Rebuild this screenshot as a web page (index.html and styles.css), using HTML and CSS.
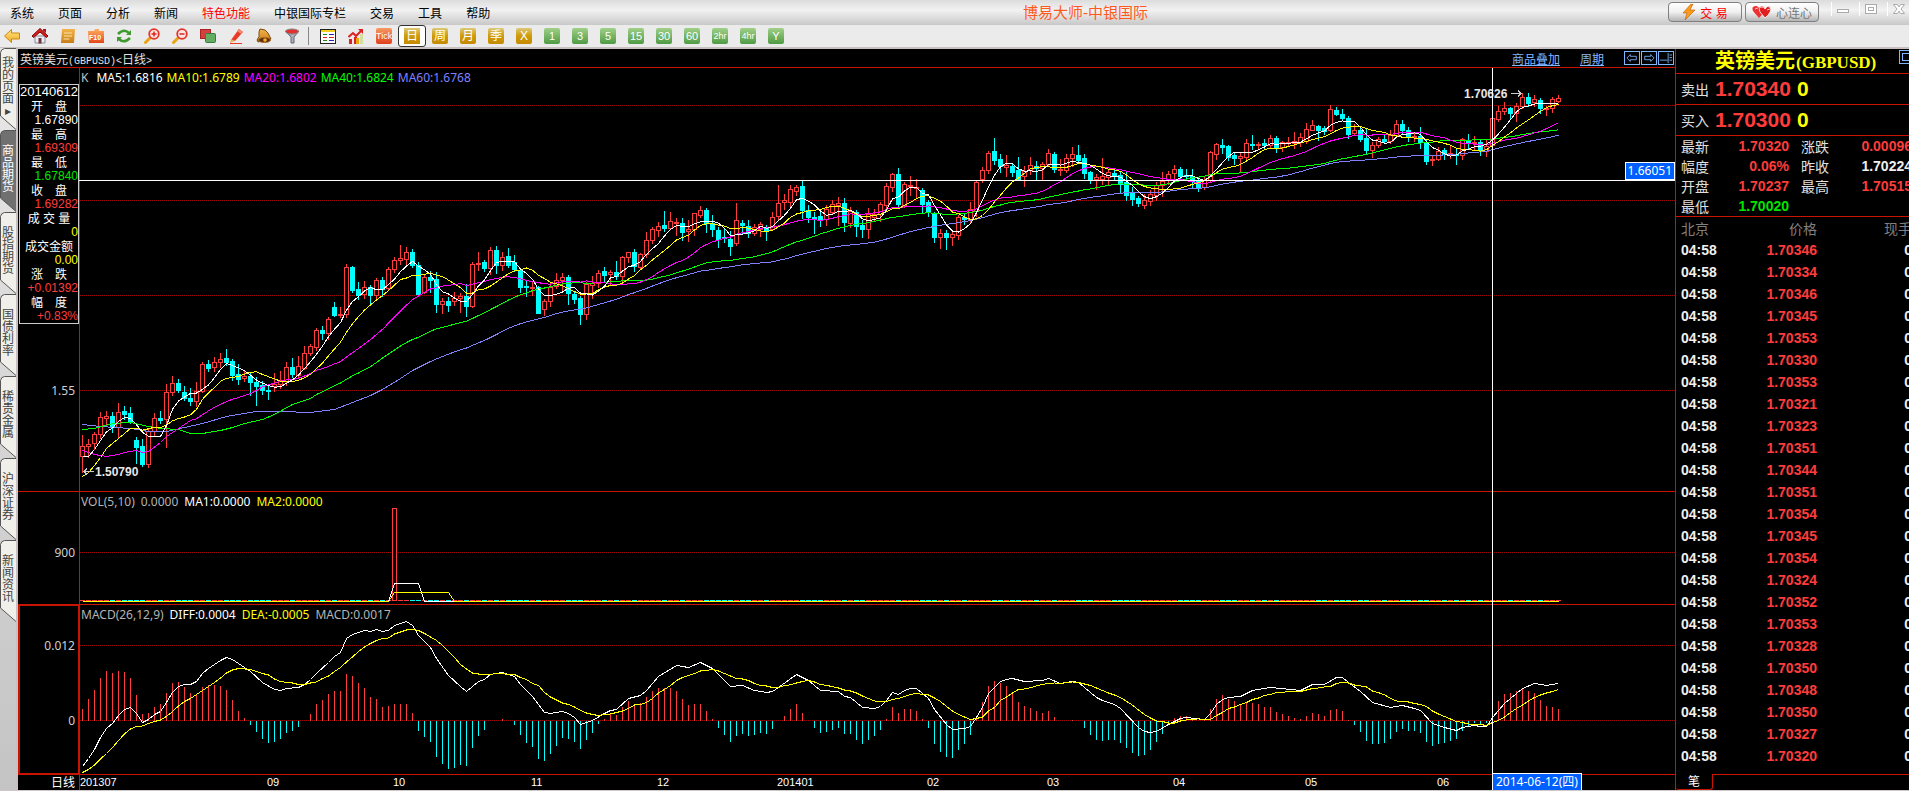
FILE: index.html
```html
<!DOCTYPE html>
<html lang="zh-CN">
<head>
    <meta charset="UTF-8">
    <meta name="viewport" content="width=device-width, initial-scale=1.0">
    <title>博易大师-中银国际</title>
    <link rel="stylesheet" href="styles.css">
</head>
<body>
    <svg class="defs" aria-hidden="true">
        <defs>
            <linearGradient id="gold" x1="0" y1="0" x2="0" y2="1"><stop offset="0" stop-color="#ffe88a"/><stop offset="1" stop-color="#f2a81c"/></linearGradient>
            <linearGradient id="orange" x1="0" y1="0" x2="0" y2="1"><stop offset="0" stop-color="#ffb060"/><stop offset="1" stop-color="#e2461a"/></linearGradient>
            <linearGradient id="bronze" x1="0" y1="0" x2="0" y2="1"><stop offset="0" stop-color="#f3b44a"/><stop offset="1" stop-color="#c87d18"/></linearGradient>
            <symbol id="tab" viewBox="0 0 16 82"><path d="M16 .5H4.500Q1 1 .5 4.500V68L16 81.500" fill="currentColor" stroke="#555"/></symbol>
        </defs>
    </svg>

    <header class="menubar">
        <nav class="menu">
            <a href="#">系统</a>
            <a href="#">页面</a>
            <a href="#">分析</a>
            <a href="#">新闻</a>
            <a href="#" class="hot">特色功能</a>
            <a href="#">中银国际专栏</a>
            <a href="#">交易</a>
            <a href="#">工具</a>
            <a href="#">帮助</a>
        </nav>
        <h1>博易大师-中银国际</h1>
        <div class="window-tools">
            <button class="pill trade">
                <svg width="14" height="16" viewBox="0 0 14 16"><path d="M9 0L1 9h4L3 16l10-10H8l3-6z" fill="#ff9a1a" stroke="#b85c00" stroke-width=".6"/></svg>
                交 易
            </button>
            <button class="pill">
                <svg width="20" height="14" viewBox="0 0 20 14"><path d="M7 13L1 6Q-1 1 4 1 6 1 7 3 9 0 12 2 14 6 7 13z" fill="#f03030"/><path d="M13 13L8 7Q6 2 10 2 12 2 13 4 15 0 18 2 21 6 13 13z" fill="#e02020" stroke="#fff" stroke-width=".8"/><path d="M3 4l3-1M15 5l3-1" stroke="#fbb"/></svg>
                心连心
            </button>
            <button class="win" aria-label="最小化"><svg width="14" height="14" viewBox="0 0 14 14"><rect x="1.500" y="7.500" width="11" height="3" fill="#fff" stroke="#aaa"/></svg></button>
            <button class="win" aria-label="还原"><svg width="14" height="14" viewBox="0 0 14 14"><rect x="1.500" y="2.500" width="11" height="9" fill="#fff" stroke="#aaa"/><rect x="4.500" y="5.500" width="5" height="3" fill="none" stroke="#aaa"/></svg></button>
            <button class="win" aria-label="关闭"><svg width="14" height="14" viewBox="0 0 14 14"><path d="M1.500 2.500h4L7 5l1.500-2.500h4L9 7l3.500 4.500h-4L7 9l-1.500 2.500h-4L5 7z" fill="#fff" stroke="#aaa"/></svg></button>
        </div>
    </header>

    <div class="toolbar">
        <button aria-label="后退"><svg viewBox="0 0 16 16"><path d="M.5 8L7.500 1.500V5H15.500V11H7.500V14.500z" fill="url(#gold)" stroke="#c98a10"/></svg></button>
        <button aria-label="首页"><svg viewBox="0 0 16 16"><path d="M3 8h10v7H3z" fill="#e8eef5" stroke="#889"/><path d="M8 .5L16 8l-1.500 1.500L8 4 1.500 9.500 0 8z" fill="#d81e1e" stroke="#800"/><path d="M11 1h3v4l-3-2.500z" fill="#a11"/><path d="M6.500 10h3v5.500h-3z" fill="#733"/></svg></button>
        <button aria-label="公告"><svg viewBox="0 0 16 16"><path d="M2 1h13l-1 14H1z" fill="url(#bronze)"/><path d="M4 5h8M4 8h8M3.500 11h6" stroke="#fbe3a8"/></svg></button>
        <button aria-label="F10资料"><svg viewBox="0 0 16 16"><path d="M0 3h6l1-2h4v2h5v12H1z" fill="url(#orange)"/><text x="1" y="12" class="glyph-sm">F10</text></svg></button>
        <button aria-label="刷新"><svg viewBox="0 0 16 16" fill="none" stroke="#3f9a30" stroke-width="2.500"><path d="M2 6Q8 0 13 5M14 10Q8 16 3 11"/><path d="M15 2v5h-5zM1 14V9h5z" fill="#3f9a30" stroke="none"/></svg></button>
        <button aria-label="放大"><svg viewBox="0 0 16 16"><path d="M1.500 14.500L6 10" stroke="#eaa512" stroke-width="3" stroke-linecap="round"/><circle cx="10" cy="6" r="4.800" fill="#ffe6e2" stroke="#e3342b" stroke-width="1.800"/><path d="M7.500 6h5M10 3.500v5" stroke="#d22" stroke-width="1.500"/></svg></button>
        <button aria-label="缩小"><svg viewBox="0 0 16 16"><path d="M1.500 14.500L6 10" stroke="#eaa512" stroke-width="3" stroke-linecap="round"/><circle cx="10" cy="6" r="4.800" fill="#ffe6e2" stroke="#e3342b" stroke-width="1.800"/><path d="M7.500 6h5" stroke="#d22" stroke-width="1.500"/></svg></button>
        <button aria-label="叠加"><svg viewBox="0 0 16 16"><rect x=".5" y="1.500" width="10" height="9" fill="#d24040" stroke="#a22"/><rect x="5.500" y="5.500" width="10" height="9" rx="1" fill="#62ad62" stroke="#3c7a3c"/></svg></button>
        <button aria-label="画线"><svg viewBox="0 0 16 16"><path d="M3 12L11 1l4 3-8 9z" fill="#e83a24"/><path d="M11 1l4 3-2 2-4-3z" fill="#f58a70"/><path d="M3 11l4 2-5 2z" fill="#e8b060"/><path d="M2 15.500h12" stroke="#e83a24"/></svg></button>
        <button aria-label="预警"><svg viewBox="0 0 16 16"><path d="M4 1Q10 1 12 5L15 11 2 14 1 12Q4 9 3 4z" fill="url(#bronze)" stroke="#7a4a10"/><ellipse cx="8.500" cy="12" rx="6" ry="2.500" fill="#5e2c08" stroke="#a86a1c"/><circle cx="9" cy="12" r="1.800" fill="#f8b030"/></svg></button>
        <button aria-label="筛选"><svg viewBox="0 0 16 16"><path d="M1.500 3L7 9v6h3V9l5-6z" fill="#aab0b8" stroke="#667"/><ellipse cx="8" cy="3.500" rx="6.500" ry="2.500" fill="#e23030" stroke="#888"/></svg></button>
        <span class="sep"></span>
        <button aria-label="报价"><svg viewBox="0 0 16 16" shape-rendering="crispEdges"><path d="M0 1h16v15H0z" fill="#222"/><path d="M1 4h14v11H1z" fill="#fff"/><path d="M1 2h14v2H1z" fill="#f1d020"/><path d="M3 6.500h4M3 12.500h4" stroke="#282"/><path d="M9 6.500h5M9 12.500h5" stroke="#22a"/><path d="M3 9.500h4M9 9.500h5" stroke="#d22"/></svg></button>
        <button aria-label="走势"><svg viewBox="0 0 16 16"><path d="M1 11h3v5H1zM6 9h3v7H6z" fill="#d22"/><path d="M8 10h3v6H8z" fill="#eaa512"/><path d="M12 6h3v10h-3z" fill="#cfe0a0"/><path d="M.5 9L5 5l3 3 5-5" fill="none" stroke="#d22" stroke-width="2"/><path d="M10 1h5v5z" fill="#d22"/></svg></button>
        <button class="tile tick">Tick</button>
        <button class="tile gold active">日</button>
        <button class="tile gold">周</button>
        <button class="tile gold">月</button>
        <button class="tile gold">季</button>
        <button class="tile gold">X</button>
        <button class="tile green">1</button>
        <button class="tile green">3</button>
        <button class="tile green">5</button>
        <button class="tile green">15</button>
        <button class="tile green">30</button>
        <button class="tile green">60</button>
        <button class="tile green narrow">2hr</button>
        <button class="tile green narrow">4hr</button>
        <button class="tile green">Y</button>
    </div>

    <main class="workspace">
        <nav class="side-tabs">
            <button><svg><use href="#tab"/></svg><span>我的页面▸</span></button>
            <button class="active"><svg><use href="#tab"/></svg><span>商品期货</span></button>
            <button><svg><use href="#tab"/></svg><span>股指期货</span></button>
            <button><svg><use href="#tab"/></svg><span>国债利率</span></button>
            <button><svg><use href="#tab"/></svg><span>稀贵金属</span></button>
            <button><svg><use href="#tab"/></svg><span>沪深证券</span></button>
            <button><svg><use href="#tab"/></svg><span>新闻资讯</span></button>
        </nav>

        <section class="chart">
            <div class="chart-title">
                <h2>英镑美元<span class="half">(GBPUSD)&lt;</span>日线<span class="half">&gt;</span></h2>
                <a href="#">商品叠加</a>
                <a href="#">周期</a>
                <div class="nav-icons">
                    <button aria-label="向左"><svg viewBox="0 0 16 14"><path d="M2 7l4-4v2h7v4H6v2z"/></svg></button>
                    <button aria-label="向右"><svg viewBox="0 0 16 14"><path d="M14 7l-4-4v2H3v4h7v2z"/></svg></button>
                    <button aria-label="侧栏"><svg viewBox="0 0 16 14"><path d="M10.500 1v12M1 9.500h9M12 3.500h3M12 6.500h3M12 9.500h3"/></svg></button>
                </div>
            </div>

            <div class="panels">
                <div class="axis price-axis">
                    <dl class="ohlc">
                        <dt class="date">20140612</dt>
                        <dt>开　盘</dt><dd>1.67890</dd>
                        <dt>最　高</dt><dd class="up">1.69309</dd>
                        <dt>最　低</dt><dd class="down">1.67840</dd>
                        <dt>收　盘</dt><dd class="up">1.69282</dd>
                        <dt>成 交 量</dt><dd class="vol">0</dd>
                        <dt>成交金额</dt><dd class="vol">0.00</dd>
                        <dt>涨　跌</dt><dd class="up">+0.01392</dd>
                        <dt>幅　度</dt><dd class="up">+0.83%</dd>
                    </dl>
                    <span class="scale">1.55</span>
                </div>
                <div class="plot">
                    <p class="legend"><span class="k">K</span><span>MA5:1.6816</span><span class="c10">MA10:1.6789</span><span class="c20">MA20:1.6802</span><span class="c40">MA40:1.6824</span><span class="c60">MA60:1.6768</span></p>
                    <svg id="price" height="423"></svg>
                </div>

                <div class="axis vol-axis"><span class="scale">900</span></div>
                <div class="plot">
                    <p class="legend wide"><span class="dim">VOL(5,10)</span><span class="dim">0.0000</span><span>MA1:0.0000</span><span class="c10">MA2:0.0000</span></p>
                    <svg id="volume" height="112"></svg>
                </div>

                <div class="axis macd-axis"><span class="scale">0.012</span><span class="scale">0</span></div>
                <div class="plot">
                    <p class="legend wide"><span class="dim">MACD(26,12,9)</span><span>DIFF:0.0004</span><span class="c10">DEA:-0.0005</span><span class="dim">MACD:0.0017</span></p>
                    <svg id="macd" height="169"></svg>
                </div>

                <div class="axis period">日线</div>
                <div class="plot dates"><svg id="dates" height="15"></svg></div>

                <div class="cross-h"><output>1.66051</output></div>
                <div class="cross-v"></div>
                <output class="cross-date">2014-06-12(四)</output>
            </div>
        </section>

        <aside class="quote">
            <h2>英镑美元<span>(GBPUSD)</span><i></i></h2>
            <p class="deal">卖出<b>1.70340</b><b class="lots">0</b></p>
            <p class="deal">买入<b>1.70300</b><b class="lots">0</b></p>
            <table class="stats">
                <tr><th>最新</th><td>1.70320</td><th>涨跌</th><td>0.00096</td></tr>
                <tr><th>幅度</th><td>0.06%</td><th>昨收</th><td class="flat">1.70224</td></tr>
                <tr><th>开盘</th><td>1.70237</td><th>最高</th><td>1.70515</td></tr>
                <tr><th>最低</th><td class="down">1.70020</td><th></th><td></td></tr>
            </table>
            <table class="ticks">
                <thead><tr><th>北京</th><th>价格</th><th>现手</th></tr></thead>
                <tbody id="ticks"></tbody>
            </table>
            <div class="quote-tabs"><button>笔</button></div>
        </aside>
    </main>
    <script src="chart.js"></script>
</body>
</html>
```
FILE: styles.css
```css
* {
    box-sizing: border-box;
}
body {
    margin: 0;
    min-height: 100vh;
    overflow: hidden;
    display: flex;
    flex-direction: column;
    font-family: "Liberation Sans", "Noto Sans CJK SC", sans-serif;
    font-size: 12px;
    background: #000;
    color: #e0e0e0;
}
h1, h2, p, dl, dd {
    margin: 0;
    font-weight: normal;
}
button {
    font-family: inherit;
    padding: 0;
    border: none;
    background: none;
    cursor: pointer;
}
svg {
    display: block;
}
.defs {
    position: absolute;
    width: 0;
    height: 0;
}

/* menu bar */
.menubar {
    height: 25px;
    display: grid;
    grid-template-columns: 1fr auto 1fr;
    align-items: center;
    background: linear-gradient(#dcdcdc, #f2f2f2 40%, #c8c8c8);
}
.menu {
    display: flex;
    gap: 24px;
    padding-left: 10px;
}
.menu a {
    color: #000;
    text-decoration: none;
    white-space: nowrap;
}
.menu .hot {
    color: #f00;
}
.menubar h1 {
    font-size: 15px;
    line-height: 24px;
    color: #ff5a1e;
    padding-left: 262px;
}
.window-tools {
    display: flex;
    justify-content: flex-end;
    gap: 3px;
    height: 25px;
    padding-top: 2px;
}
.pill {
    width: 74px;
    height: 20px;
    display: flex;
    align-items: center;
    justify-content: center;
    gap: 4px;
    border: 1px solid #808080;
    border-radius: 4px;
    background: linear-gradient(#fff, #f0f0f0 50%, #b4b4b4);
    font-size: 12px;
    color: #777;
}
.trade {
    color: #f00;
}
.win {
    width: 22px;
    height: 14px;
    margin-left: 3px;
    display: flex;
    justify-content: center;
    border-left: 1px solid #fff;
}
.pill + .win {
    margin-left: 9px;
}

/* toolbar */
.toolbar {
    height: 24px;
    display: flex;
    align-items: center;
    gap: 12px;
    padding: 0 4px;
    background: #ebebeb;
    border-bottom: 2px solid #c8c0c0;
}
.toolbar button {
    flex: none;
    width: 16px;
    height: 16px;
}
.toolbar .sep {
    width: 1px;
    height: 18px;
    margin: 0 -1px 0 -4px;
    background: #888;
}
.glyph-sm {
    font: bold 7px "Liberation Sans", sans-serif;
    fill: #fff;
}
.tile {
    border-radius: 2px;
    color: #fff;
    font-size: 12px;
    line-height: 16px;
    text-align: center;
}
.tick {
    background: linear-gradient(#f79a62, #e0401c);
    font-size: 9px;
}
.gold {
    background: linear-gradient(#dcc878, #cf9a08 50%, #c48a04);
}
.green {
    background: linear-gradient(#a0d088, #4f9a44);
    font-size: 11px;
}
.narrow {
    font-size: 9px;
}
.toolbar .active {
    width: 28px;
    height: 22px;
    margin: 0 -6px;
    border: 1px solid #333;
    border-radius: 3px;
    background: linear-gradient(#dcc878, #cf9a08 50%, #c48a04) center / 16px 16px no-repeat #fff;
}

/* layout */
.workspace {
    flex: 1;
    display: grid;
    grid-template-columns: 18px 1fr 234px;
    border-bottom: 1px solid #d0c8c8;
}

.side-tabs {
    margin-top: -1px;
    border-right: 2px solid #c8c0c0;
    background: linear-gradient(#e8e8e8, #c4c4c4);
}
.side-tabs button {
    position: relative;
    display: flex;
    align-items: center;
    justify-content: center;
    width: 16px;
    height: 82px;
    padding-bottom: 4px;
    font-size: 12px;
    line-height: 12px;
    color: #444;
}
.side-tabs svg {
    position: absolute;
    inset: 0;
    width: 16px;
    height: 82px;
    color: #f0efea;
}
.side-tabs span {
    position: relative;
    width: 12px;
}
.side-tabs .active {
    color: #fff;
}
.side-tabs .active svg {
    color: #707070;
}

/* chart */
.chart-title {
    height: 19px;
    display: flex;
    align-items: center;
    border-bottom: 1px solid #c81400;
    padding: 0 1px 0 2px;
}
.chart-title h2 {
    flex: 1;
    font-size: 12px;
}
.half {
    font-family: "Liberation Mono", monospace;
    font-size: 10px;
}
.chart-title a {
    color: #80b8ff;
    margin-right: 20px;
}
.nav-icons {
    display: flex;
    gap: 1px;
}
.nav-icons svg {
    width: 16px;
    height: 14px;
    border: 1px solid #80b8ff;
    fill: none;
    stroke: #80b8ff;
}
.panels {
    position: relative;
    display: grid;
    grid-template-columns: 62px 1fr;
}
.axis {
    border-right: 1px solid #c81400;
    border-bottom: 1px solid #c81400;
    padding-right: 4px;
    display: flex;
    flex-direction: column;
    text-align: right;
    font: 12px/14px "Noto Sans", sans-serif;
    color: #d0d0d0;
}
.price-axis {
    padding-top: 16px;
}
.price-axis .scale {
    margin-top: 60px;
}
.vol-axis {
    padding-top: 54px;
}
.macd-axis {
    border: 2px solid #c81400;
    border-top-width: 1px;
    padding: 33px 3px 0 0;
    gap: 61px;
}
.period {
    border-bottom: none;
    font-family: "Noto Sans CJK SC", sans-serif;
    color: #fff;
}
.ohlc {
    margin: 0 -4px 0 1px;
    width: 60px;
    border: 1px solid #ccc;
    font-family: "Liberation Sans", "Noto Sans CJK SC", sans-serif;
    line-height: 14px;
    color: #fff;
    white-space: nowrap;
}
.ohlc dt {
    height: 14px;
    line-height: 16px;
    text-align: center;
}
.ohlc dd {
    height: 14px;
}
.ohlc .date {
    font-size: 13px;
    line-height: 14px;
}
.ohlc .up {
    color: #ff3c3c;
}
.down, .ohlc .down {
    color: #00e600;
}
.ohlc .vol {
    color: #ff0;
}
.plot {
    position: relative;
    min-width: 0;
    border-bottom: 1px solid #c81400;
}
.dates {
    border-bottom: none;
}
.plot svg {
    width: 100%;
}
.legend {
    position: absolute;
    top: 2px;
    left: 1px;
    display: flex;
    gap: 4px;
    font: 12px/16px "Noto Sans", sans-serif;
    color: #fff;
}
.wide {
    gap: 6px;
}
.k {
    color: #c0c0c0;
    margin-right: 4px;
}
.dim { color: #b4b4b4; }
.c10 { color: #ff0; }
.c20 { color: #f0f; }
.c40 { color: #0f0; }
.c60 { color: #8080ff; }

.grid {
    stroke: #a00000;
    stroke-dasharray: 1 1;
}
.rise { stroke: #ff3c3c; fill: #000; }
.fall { stroke: #0ff; fill: #0ff; }
.line { fill: none; stroke: #fff; }
.line.c10 { stroke: #ff0; }
.line.c20 { stroke: #f0f; }
.line.c40 { stroke: #0f0; }
.line.c60 { stroke: #8080ff; }
.note {
    font: bold 12px "Liberation Sans", sans-serif;
    fill: #e8e8e8;
}
.arrow {
    fill: none;
    stroke: #ccc;
}
.month {
    font: 11px "Liberation Sans", sans-serif;
    fill: #fff;
}

.cross-h, .cross-v, .cross-date {
    position: absolute;
}
.cross-h {
    left: 61px;
    right: 0;
    top: 94px;
    height: 19px;
    border-bottom: 1px solid #fff;
    display: flex;
    justify-content: flex-end;
}
.cross-h output, .cross-date {
    border: 1px solid #fff;
    background: #0060ff;
    color: #fff;
    padding: 0 2px;
    font: 12px/16px "Noto Sans", "Noto Sans CJK SC", sans-serif;
}
.cross-v {
    left: 1474px;
    top: 0;
    bottom: 15px;
    border-left: 1px solid #fff;
}
.cross-date {
    left: 1474px;
    bottom: 0;
    height: 17px;
    border-bottom: none;
    padding: 0 3px;
}

/* quote panel */
.quote {
    border-left: 1px solid #c81400;
    overflow: hidden;
    display: flex;
    flex-direction: column;
    font-size: 14px;
}
.quote h2 {
    position: relative;
    height: 25px;
    border-bottom: 1px solid #c81400;
    color: #ff0;
    font-size: 20px;
    font-weight: bold;
    line-height: 24px;
    padding-left: 39px;
    white-space: nowrap;
}
.quote h2 span {
    font: bold 17px "Liberation Serif", serif;
    margin-left: 1px;
}
.quote h2 i {
    position: absolute;
    right: -6px;
    top: 1px;
    width: 16px;
    height: 14px;
    border: 1px solid #80b8ff;
}
.quote h2 i::after {
    content: "";
    position: absolute;
    inset: 2px;
    border: 1px solid #80b8ff;
}
.deal {
    height: 31px;
    border-bottom: 1px solid #c81400;
    display: flex;
    align-items: center;
    padding-left: 5px;
}
.deal b {
    font-size: 21px;
    color: #ff3c3c;
    margin-left: 6px;
}
.deal .lots {
    color: #ff0;
}
.quote table {
    width: 236px;
    flex: none;
    border-collapse: collapse;
    table-layout: fixed;
}
.quote th {
    font-weight: normal;
    text-align: left;
}
.quote td {
    font-weight: bold;
    color: #ff3c3c;
    text-align: right;
}
.quote th, .quote td {
    padding: 0;
    white-space: nowrap;
}
.stats tr {
    height: 20px;
}
.stats th:first-child {
    width: 38px;
    padding-left: 5px;
}
.stats td:nth-child(2) {
    width: 75px;
}
.stats th:nth-child(3) {
    width: 46px;
    padding-left: 12px;
}
.quote .down {
    color: #00e600;
}
.quote .flat {
    color: #f0f0f0;
}
.quote .ticks {
    border-top: 1px solid #c81400;
}
.ticks tr {
    height: 22px;
}
.ticks th {
    color: #808080;
}
.ticks th:first-child {
    width: 50px;
    padding-left: 5px;
}
.ticks th:nth-child(2) {
    width: 91px;
    text-align: right;
}
.ticks th:nth-child(3) {
    text-align: right;
}
.ticks td:first-child {
    padding-left: 5px;
    text-align: left;
}
.ticks td:first-child, .ticks td:last-child {
    color: #f0f0f0;
}
.quote-tabs {
    margin-top: auto;
    display: flex;
    height: 16px;
}
.quote-tabs button {
    width: 37px;
    border-right: 1px solid #c81400;
    border-bottom: 1px solid #c81400;
    border-radius: 0 0 3px 3px;
    color: #fff;
    font-size: 12px;
    line-height: 14px;
}
.quote-tabs::after {
    content: "";
    flex: 1;
    border-top: 1px solid #c81400;
}
```
FILE: chart.js
```js
// type, high, body top, body bottom, low  (screen rows, one bar per trading day)
const raw = `
r435,446,456,472 r439,444,446,457 r432,434,443,449 r412,417,434,438 r411,416,418,424 c412,416,426,432 r403,412,427,437 c406,411,414,419 c407,413,422,423 c437,440,447,463
c439,446,464,466 r428,431,464,467 r413,418,431,436 c411,418,420,423 r384,392,419,447 r376,383,392,395 c379,383,390,392 c386,392,398,400 c388,398,401,405 r382,391,401,406
r362,364,391,392 c360,364,368,371 r357,362,367,371 r353,359,362,367 c349,358,362,365 c359,361,375,380 c364,374,379,384 r370,376,378,381 c373,376,382,395 c377,382,386,405
c381,385,390,394 c384,390,391,399 r373,384,386,391 r371,381,384,388 r362,367,381,385 c358,367,374,377 r356,366,375,378 r346,353,368,369 r344,346,353,355 r328,330,347,350
c326,330,333,339 r317,319,333,339 c302,307,315,316 r307,314,315,317 r264,267,314,317 c266,267,290,292 c282,289,295,299 r281,287,294,298 c285,287,295,305 r278,280,295,299
c277,280,289,296 r267,269,288,290 r257,260,269,272 r245,258,260,264 r247,252,259,264 c249,252,265,267 c262,265,294,295 r275,277,292,293 c271,277,280,292 c272,279,304,312
r298,301,304,313 c297,301,305,311 r292,298,301,305 r293,296,298,312 c284,296,306,316 r262,264,306,307 r252,263,264,270 c260,262,268,271 r247,250,268,274 c246,250,265,273
r252,257,265,270 c248,256,265,267 c255,262,269,271 c269,270,287,292 c280,286,287,296 r281,287,288,295 c286,287,313,313 r299,301,309,315 r282,287,301,306 r273,280,286,288
r273,277,280,290 c275,277,293,304 c291,294,299,303 c296,298,314,324 r282,284,314,319 r276,283,285,298 r270,273,283,287 c267,271,275,282 r270,272,274,284 c261,272,276,279
r256,257,276,282 r252,252,257,262 c249,252,266,271 r253,254,267,269 r232,240,254,257 r227,229,240,243 r222,226,230,236 c211,225,228,231 r212,221,228,229 r218,222,223,235
c218,223,232,240 r220,229,231,241 r213,213,229,235 r206,210,215,217 c208,210,223,232 c215,223,229,236 c227,230,239,247 c229,237,238,242 c231,239,246,255 r203,220,243,245
c220,223,225,234 c220,226,233,237 r224,227,233,235 r222,224,229,236 c225,227,230,240 r212,217,229,230 r185,203,216,220 r194,200,202,209 r185,189,202,207 r185,187,191,195
c180,186,210,218 c205,210,217,222 c212,217,219,233 c212,216,219,226 r205,209,219,225 r200,204,212,213 r197,203,205,225 c198,203,222,231 r207,211,223,227 c210,212,226,236
c220,225,229,237 r208,214,229,238 r209,214,217,221 r202,204,214,221 r183,186,205,210 r173,174,187,191 c168,174,204,206 r182,184,205,207 r176,185,186,195 r179,187,188,197
c188,190,204,213 c200,202,212,216 c212,214,237,242 r229,233,237,248 c230,233,237,249 r231,234,237,245 r215,217,235,239 c213,217,219,224 r202,209,219,222 r181,182,211,216
r167,170,179,182 r151,153,170,173 c138,151,160,164 c154,159,166,172 r155,165,167,176 c163,166,172,176 c157,170,179,180 r166,171,176,186 r157,165,170,174 c161,166,168,179
r162,164,168,179 r149,153,164,166 c152,154,169,172 r159,169,170,175 r154,158,170,172 r147,154,158,166 c145,155,160,161 c154,158,173,178 c171,172,179,183 r174,177,179,189
r158,176,179,184 r169,172,177,185 c169,173,175,180 c172,175,184,192 c171,182,195,200 c187,193,199,205 c196,198,203,206 r194,200,205,208 r190,194,201,205 r182,185,195,200
r172,181,185,196 r171,174,180,184 r165,169,173,181 c167,169,176,178 c169,175,176,178 c169,176,181,188 c178,181,188,191 r177,180,187,189 r151,152,180,181 r143,144,154,159
c139,145,147,153 c145,146,157,160 c153,155,158,164 r152,156,158,171 r139,143,157,161 c135,144,145,149 r142,144,145,149 c139,143,145,149 r135,138,145,147 c136,138,147,152
r141,142,147,151 r137,142,143,146 r132,141,143,148 r133,137,142,146 r123,129,141,143 r120,125,130,130 c125,126,130,140 c126,128,131,134 r105,109,130,131 c107,110,114,115
c109,114,118,120 c116,118,134,138 r124,130,133,135 c126,130,139,141 c128,138,150,153 r142,145,150,157 r137,139,145,147 c135,139,141,143 r130,135,141,143 r120,124,135,137
c120,124,130,133 c127,130,137,141 r133,136,137,141 c127,136,142,148 c140,142,161,164 r155,159,160,165 r147,151,159,160 c148,150,154,159 r146,153,154,158 c149,154,155,164
r138,139,155,159 c134,140,142,148 r136,142,143,150 c140,142,150,155 r140,146,151,156 r118,118,145,146 r106,111,119,121 r102,108,111,114 c107,108,113,118 r103,106,113,121
r93,97,106,108 c93,97,103,106 r95,99,102,106 c98,100,108,113 r106,108,109,115 r97,99,108,112 r95,98,101,102`;

const bars = raw.trim().split(/\s+/).map(s => {
    const [high, top, bottom, low] = s.slice(1).split(',').map(Number);
    const up = s[0] === 'r';
    return { up, high, top, bottom, low, close: up ? top : bottom };
});

// MACD column heights, up is positive
const macd = [
    12,22,31,43,50,48,50,49,43,26,7,8,14,17,28,38,39,34,28,26,34,36,36,35,31,21,10,3,-4,-11,-18,-22,-21,-18,-12,-10,-6,0,7,17,
    21,27,30,30,47,45,38,33,24,22,14,15,17,17,17,8,-10,-16,-21,-36,-43,-48,-47,-44,-45,-27,-15,-9,0,0,2,0,-4,-14,-22,-26,-38,-40,-33,-25,
    -17,-18,-21,-28,-19,-12,-3,2,7,6,14,20,16,18,24,30,33,33,33,30,22,16,17,17,10,2,-7,-14,-21,-15,-13,-15,-14,-12,-13,-8,0,5,12,17,
    8,0,-7,-12,-11,-9,-7,-13,-13,-19,-23,-19,-15,-9,2,14,8,12,12,10,2,-7,-23,-31,-36,-37,-29,-23,-14,2,19,35,40,38,35,29,19,15,13,10,
    8,10,4,0,0,1,0,-7,-14,-19,-20,-19,-19,-22,-27,-32,-35,-34,-29,-21,-13,-3,3,5,5,3,0,1,12,22,26,22,20,16,18,18,17,14,14,9,
    7,5,3,2,5,8,7,5,11,12,10,1,-4,-11,-20,-23,-23,-22,-18,-11,-8,-10,-10,-12,-21,-25,-23,-22,-20,-18,-10,-5,-2,-4,-2,10,20,27,28,30,
    33,30,28,21,15,14,12
];

// DIFF line, bar index : row
const diffKeys = `0:766 1:758 2:749 3:737 4:728 5:723 6:715 7:709 8:707 9:713 10:722 11:719 12:714 13:711 14:702 15:692 16:686 17:684 18:684 19:681
20:673 21:668 23:660 24:657 25:659 27:667 28:671 30:682 32:689 33:690 34:688 36:687 37:684 38:679 39:673 41:662 42:656 43:652 44:638 45:634
47:630 48:631 49:629 50:631 51:630 52:625 54:621 55:625 56:635 58:647 59:658 61:675 63:686 64:691 65:686 66:681 67:679 68:674 70:672 72:676
73:684 75:696 77:712 78:713 80:711 81:713 82:717 83:724 85:720 87:713 88:710 89:709 91:698 93:695 94:690 96:676 99:665 101:667 103:662 105:668
108:686 110:685 112:690 114:692 115:691 116:687 119:674 121:680 123:690 126:691 127:696 128:697 130:707 132:708 133:706 134:700 135:692 136:694 137:690 138:688
139:688 141:698 142:709 144:724 145:729 147:728 148:726 149:717 150:707 151:693 153:681 154:679 155:678 157:681 160:680 161:678 163:683 165:681 166:682 169:697
170:700 172:704 173:708 176:727 177:731 178:732 179:731 181:724 183:718 184:717 187:719 188:713 189:704 190:699 191:697 193:696 195:690 198:687 203:690 205:684
207:684 209:677 210:677 211:682 213:691 215:702 218:707 220:705 222:708 223:710 225:723 227:727 229:730 230:727 232:725 233:726 234:726 235:717 237:703 238:698 240:688 242:683 244:685 246:683`;

// averages before enough bars are loaded
const lead = {
    5: '0:456 1:456 2:449 3:440',
    10: '0:476 1:472 2:465 3:457 4:448 5:443 6:438 7:433 8:428',
    20: '0:450 2:454 4:456 6:454 7:452 9:450 10:452 11:451 13:442 14:436 16:428 18:420',
    40: '0:429 2:428 5:423 8:422 11:426 13:428 16:429 18:433 20:433 23:430 25:427 27:423 30:419 32:414 35:404 37:400 38:398',
    60: '0:424 3:426 8:428 11:431 14:431 17:427 20:423 24:416 29:411 33:411 38:412 42:409 45:402 48:395 50:389 53:378 55:370 58:361'
};

const STEP = 6;
const x = i => i * STEP + 2.5;

function spread(keys) {
    const pts = keys.trim().split(/\s+/).map(k => k.split(':').map(Number));
    const out = [];
    pts.forEach(([i, y], n) => {
        out[i] = y;
        const next = pts[n + 1];
        if (!next) return;
        for (let j = i + 1; j < next[0]; j++) {
            out[j] = y + (next[1] - y) * (j - i) / (next[0] - i);
        }
    });
    return out;
}

function average(n) {
    const out = spread(lead[n]);
    for (let i = n - 1; i < bars.length; i++) {
        let sum = 0;
        for (let j = i - n + 1; j <= i; j++) sum += bars[j].close;
        out[i] = sum / n;
    }
    return out;
}

const grid = y => `<line class="grid" x1="0" x2="100%" y1="${y}" y2="${y}"/>`;
const line = (ys, cls) => `<polyline class="line ${cls}" points="${ys.map((y, i) => x(i) + ',' + (y + 0.5)).join(' ')}"/>`;
const draw = (id, top, body) => {
    document.getElementById(id).innerHTML = `<g shape-rendering="crispEdges" transform="translate(0 ${-top})">${body}</g>`;
};

// price
let out = [105.5, 200.5, 295.5, 390.5].map(grid).join('');
bars.forEach((b, i) => {
    const cls = b.up ? 'rise' : 'fall';
    out += `<g class="${cls}"><line x1="${x(i)}" x2="${x(i)}" y1="${b.high}" y2="${b.low + 1}"/>`
        + `<rect x="${x(i) - 2}" y="${b.top + 0.5}" width="4" height="${b.bottom - b.top}"/></g>`;
});
[60, 40, 20, 10, 5].forEach(n => { out += line(average(n), 'c' + n); });
out += '<path class="arrow" d="M3 471.500h11M7 468.500l-3 3 3 3"/><text class="note" x="15" y="476">1.50790</text>';
out += '<path class="arrow" d="M1431 93.500h10M1438 90.500l3 3-3 3"/><text class="note" x="1384" y="98">1.70626</text>';
draw('price', 68, out);

// volume
out = grid(552.5);
bars.forEach((b, i) => {
    out += `<line class="${b.up ? 'rise' : 'fall'}" x1="${x(i) - 2.5}" x2="${x(i) + 2.5}" y1="600.5" y2="600.5"/>`;
});
out += `<rect class="rise" x="${x(52) - 2}" y="508.5" width="4" height="92"/>`;
out += line(bars.map((b, i) => i > 51 && i < 57 ? 583 : 601), '');
out += line(bars.map((b, i) => i > 51 && i < 62 ? 592 : 601), 'c10');
draw('volume', 492, out);

// macd
const diff = spread(diffKeys);
out = grid(645.5) + grid(720.5);
macd.forEach((h, i) => {
    if (h) out += `<line class="${h > 0 ? 'rise' : 'fall'}" x1="${x(i)}" x2="${x(i)}" y1="720.5" y2="${720.5 - h}"/>`;
});
out += line(diff, '') + line(diff.map((y, i) => y + macd[i] / 2), 'c10');
draw('macd', 605, out);

// dates
const months = [[0, '201307'], [187, '09'], [313, '10'], [451, '11'], [577, '12'], [697, '201401'], [847, '02'], [967, '03'], [1093, '04'], [1225, '05'], [1357, '06']];
draw('dates', 0, months.map(([px, t]) => `<text class="month" x="${px}" y="11">${t}</text>`).join(''));

// time and sales
const ticks = [346, 334, 346, 345, 353, 330, 353, 321, 323, 351, 344, 351, 354, 345, 354, 324, 352, 353, 328, 350, 348, 350, 327, 320];
document.getElementById('ticks').innerHTML = ticks.map(t => `<tr><td>04:58</td><td>1.70${t}</td><td>0</td></tr>`).join('');
```
